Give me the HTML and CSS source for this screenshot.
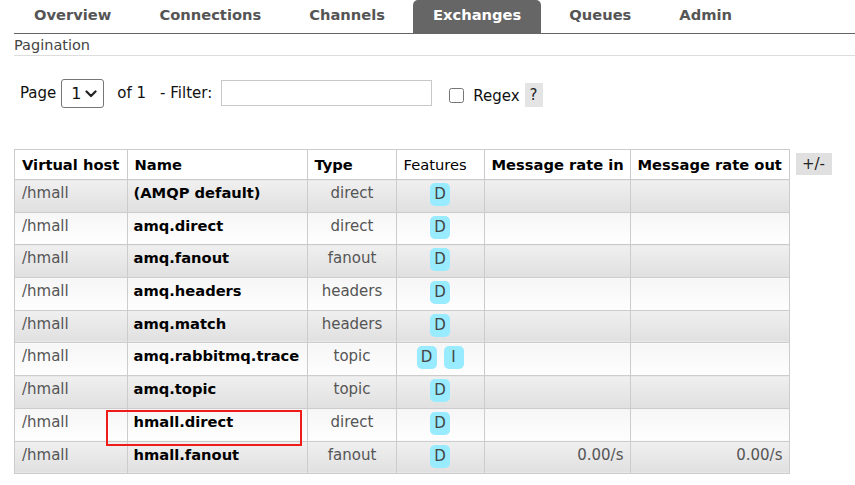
FILE: index.html
```html
<!DOCTYPE html>
<html>
<head>
<meta charset="utf-8">
<link rel="stylesheet" href="styles.css">
</head>
<body>
<div class="page">
  <nav class="tabs">
    <a class="tab">Overview</a>
    <a class="tab">Connections</a>
    <a class="tab">Channels</a>
    <a class="tab active">Exchanges</a>
    <a class="tab">Queues</a>
    <a class="tab">Admin</a>
  </nav>
  <div class="section-title">Pagination</div>
  <div class="filter-row">
    <span class="lbl">Page</span>
    <span class="select-wrap">
      <select class="page-select"><option>1</option></select>
      <svg class="chev" width="12" height="8" viewBox="0 0 12 8"><path d="M1.5 1.5 L6 6 L10.5 1.5" fill="none" stroke="#222" stroke-width="2.2" stroke-linecap="round" stroke-linejoin="round"/></svg>
    </span>
    <span class="lbl of">of 1</span>
    <span class="lbl filt">- Filter:</span>
    <input class="filter-input" type="text">
    <input class="regex-box" type="checkbox">
    <span class="lbl regex">Regex</span>
    <span class="help">?</span>
  </div>
  <div class="table-area">
    <table class="list">
      <colgroup>
        <col class="c-vhost"><col class="c-name"><col class="c-type"><col class="c-feat"><col class="c-in"><col class="c-out">
      </colgroup>
      <thead>
        <tr><th>Virtual host</th><th>Name</th><th>Type</th><th class="normal">Features</th><th>Message rate in</th><th>Message rate out</th></tr>
      </thead>
      <tbody>
        <tr class="alt1"><td class="vh">/hmall</td><td class="nm">(AMQP default)</td><td class="ty">direct</td><td class="ft"><span class="badge">D</span></td><td></td><td></td></tr>
        <tr class="alt2"><td class="vh">/hmall</td><td class="nm">amq.direct</td><td class="ty">direct</td><td class="ft"><span class="badge">D</span></td><td></td><td></td></tr>
        <tr class="alt1"><td class="vh">/hmall</td><td class="nm">amq.fanout</td><td class="ty">fanout</td><td class="ft"><span class="badge">D</span></td><td></td><td></td></tr>
        <tr class="alt2"><td class="vh">/hmall</td><td class="nm">amq.headers</td><td class="ty">headers</td><td class="ft"><span class="badge">D</span></td><td></td><td></td></tr>
        <tr class="alt1"><td class="vh">/hmall</td><td class="nm">amq.match</td><td class="ty">headers</td><td class="ft"><span class="badge">D</span></td><td></td><td></td></tr>
        <tr class="alt2"><td class="vh">/hmall</td><td class="nm">amq.rabbitmq.trace</td><td class="ty">topic</td><td class="ft"><span class="badge">D</span><span class="badge">I</span></td><td></td><td></td></tr>
        <tr class="alt1"><td class="vh">/hmall</td><td class="nm">amq.topic</td><td class="ty">topic</td><td class="ft"><span class="badge">D</span></td><td></td><td></td></tr>
        <tr class="alt2"><td class="vh">/hmall</td><td class="nm">hmall.direct</td><td class="ty">direct</td><td class="ft"><span class="badge">D</span></td><td></td><td></td></tr>
        <tr class="alt1"><td class="vh">/hmall</td><td class="nm">hmall.fanout</td><td class="ty">fanout</td><td class="ft"><span class="badge">D</span></td><td class="rate">0.00/s</td><td class="rate">0.00/s</td></tr>
      </tbody>
    </table>
    <span class="toggle">+/-</span>
  </div>
  <div class="highlight"></div>
</div>
</body>
</html>
```
FILE: styles.css
```css
html, body {
  margin: 0;
  padding: 0;
  background: #fff;
}
body {
  font-family: "DejaVu Sans", Verdana, sans-serif;
  font-size: 15px;
  color: #000;
}
.page {
  position: relative;
  width: 855px;
  height: 485px;
  overflow: hidden;
}
.tabs {
  display: flex;
  margin-left: 14px;
  height: 33px;
  border-bottom: 1px solid #666;
  gap: 8px;
}
.tab {
  display: block;
  padding: 0 20px;
  line-height: 29px;
  font-weight: bold;
  color: #555;
  font-size: 14.7px;
}
.tab.active {
  background: #666;
  color: #fff;
  border-radius: 5px 5px 0 0;
}
.section-title {
  margin-left: 14px;
  font-size: 14.5px;
  color: #444;
  height: 20px;
  line-height: 20px;
  padding-top: 1px;
  border-bottom: 1px solid #ddd;
}
.filter-row {
  display: flex;
  align-items: center;
  margin-top: 22px;
  padding-left: 20px;
  height: 30px;
}
.lbl {
  font-size: 15px;
  color: #111;
}
.select-wrap {
  position: relative;
  margin-left: 5px;
  display: inline-block;
  height: 29px;
}
.page-select {
  appearance: none;
  -webkit-appearance: none;
  width: 43px;
  height: 29px;
  border: 1px solid #767676;
  border-radius: 3px;
  background: #fff;
  font-family: "DejaVu Sans", Verdana, sans-serif;
  font-size: 16px;
  padding: 0 0 0 9px;
  color: #111;
  margin: 0;
}
.chev {
  position: absolute;
  right: 7px;
  top: 11px;
  pointer-events: none;
}
.of {
  margin-left: 13px;
}
.filt {
  margin-left: 14px;
}
.filter-input {
  margin: 0 0 0 9px;
  width: 211px;
  height: 26px;
  box-sizing: border-box;
  border: 1px solid #c8c8c8;
  padding: 0;
}
.regex-box {
  margin: 4px 0 0 17px;
  width: 15px;
  height: 15px;
}
.regex {
  margin-left: 9px;
  margin-top: 6px;
}
.help {
  margin-left: 5px;
  margin-top: 3px;
  background: #e4e4e4;
  width: 18px;
  height: 24px;
  line-height: 24px;
  text-align: center;
  color: #222;
  font-size: 15px;
}
.table-area {
  display: flex;
  align-items: flex-start;
  margin-top: 41px;
  margin-left: 14px;
}
table.list {
  border-collapse: collapse;
  table-layout: fixed;
  width: 775px;
}
.c-vhost { width: 112.5px; }
.c-name { width: 180px; }
.c-type { width: 89px; }
.c-feat { width: 88px; }
.c-in { width: 146px; }
.c-out { width: 159px; }
table.list th, table.list td {
  border: 1px solid #ccc;
  padding: 0 6px 0 7px;
  text-align: left;
  white-space: nowrap;
  overflow: hidden;
}
table.list th {
  height: 29px;
  font-weight: bold;
  color: #000;
  font-size: 14.7px;
  background: #fff;
  vertical-align: middle;
}
table.list th.normal {
  font-weight: normal;
}
table.list td {
  height: 32.7px;
  box-sizing: border-box;
  vertical-align: top;
  padding-top: 3px;
  line-height: 20px;
  color: #555;
  font-size: 15px;
}
table.list tr.alt1 td {
  background: linear-gradient(#f0f0f0, #e0e0e0);
}
table.list tr.alt2 td {
  background: linear-gradient(#f6f6f6, #fefefe);
}
table.list td.nm {
  font-weight: bold;
  color: #000;
  font-size: 14.7px;
  padding-left: 6px;
}
table.list td.ty {
  text-align: center;
}
table.list td.ft {
  text-align: center;
  padding-top: 3px;
  padding-left: 6px;
}
table.list td.rate {
  text-align: right;
}
.badge {
  display: inline-block;
  background: #99ebff;
  color: #444;
  border-radius: 5px;
  min-width: 12px;
  padding: 0 4px;
  height: 23px;
  line-height: 23px;
  font-size: 15px;
  vertical-align: top;
}
.badge + .badge {
  margin-left: 7px;
}
.toggle {
  margin-left: 6px;
  margin-top: 4px;
  background: #e0e0e0;
  width: 36px;
  height: 22px;
  line-height: 22px;
  text-align: center;
  color: #222;
  font-size: 15px;
}
.highlight {
  position: absolute;
  left: 106px;
  top: 410px;
  width: 192px;
  height: 32px;
  border: 2px solid #ee1b1b;
}
```
